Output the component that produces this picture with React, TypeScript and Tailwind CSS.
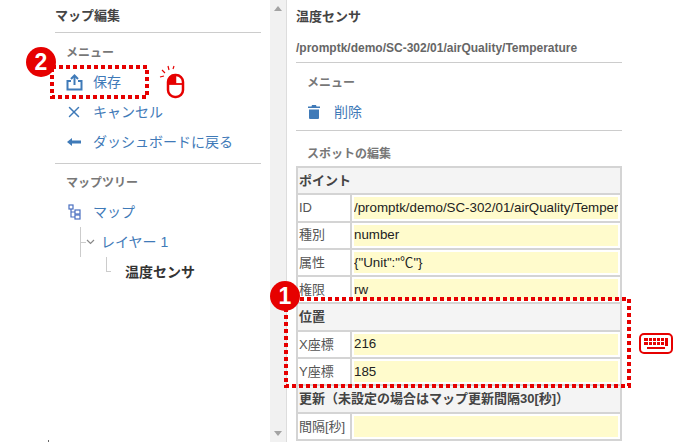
import { X } from "lucide-react";

const FONT = "font-['Liberation_Sans','Noto_Sans_CJK_JP',sans-serif]";

const SideItem = ({ icon, label }: { icon: React.ReactNode; label: string }) => (
  <div className="flex h-[30px] items-center text-[14px] text-[#3f7ab8]">
    <span className="flex w-[38px] justify-center">{icon}</span>
    <span>{label}</span>
  </div>
);

const Row = ({ label, value }: { label: string; value: string }) => (
  <div className="flex h-[27.3px] border-b-2 border-[#d4d4d4]">
    <div className="flex w-[54px] items-center border-r-2 border-[#d4d4d4] pl-[1px] text-[13px] text-[#555]">
      {label}
    </div>
    <div className="min-w-0 flex-1 p-[2px]">
      <div className="flex h-full items-center overflow-hidden whitespace-nowrap bg-[#fffbcc] text-[13.33px] text-[#222]">
        {value}
      </div>
    </div>
  </div>
);

const Head = ({ label }: { label: string }) => (
  <div className="flex h-[27.3px] items-center border-b-2 border-[#d4d4d4] bg-[#f4f4f4] pl-[1px] text-[13px] font-bold text-[#444]">
    {label}
  </div>
);

const Badge = ({ n, className }: { n: string; className: string }) => (
  <div
    className={`absolute flex h-[30px] w-[30px] items-center justify-center rounded-full bg-[#e60000] text-[23px] font-bold text-white ${className}`}
  >
    {n}
  </div>
);

const DottedBox = ({ w, h, className }: { w: number; h: number; className: string }) => (
  <svg className={`absolute ${className}`} width={w} height={h} fill="none">
    <rect x="2" y="2" width={w - 4} height={h - 4} stroke="#e60000" strokeWidth="4" strokeDasharray="4 3" />
  </svg>
);

export default function App() {
  return (
    <div className={`relative flex h-[442px] w-[674px] overflow-hidden bg-white ${FONT}`}>
      {/* 左: マップ編集 */}
      <div className="ml-[55px] w-[206px]">
        <div className="flex h-[33px] items-center border-b border-[#ccc] text-[13px] font-bold text-[#444]">
          マップ編集
        </div>
        <div className="px-[11px] pt-[12px] text-[12px] font-bold leading-[16px] text-[#777]">メニュー</div>
        <div className="mt-[6px] border-b border-[#ccc] pb-[6px]">
          <SideItem
            icon={
              <svg width="17" height="17" viewBox="0 0 17 17" fill="none" stroke="currentColor" strokeWidth="2">
                <path d="M5 7H1.500v8.500h14V7H12" />
                <path d="M8.500 11V2" />
                <path d="M5 5l3.500-3.500L12 5" />
              </svg>
            }
            label="保存"
          />
          <SideItem icon={<X size={18} strokeWidth={2} />} label="キャンセル" />
          <SideItem
            icon={
              <svg width="14" height="10" viewBox="0 0 14 10" fill="currentColor">
                <path d="M0 5l5-4v2.500h9v3H5V9z" />
              </svg>
            }
            label="ダッシュボードに戻る"
          />
        </div>
        <div className="px-[11px] pt-[11px] text-[12px] font-bold leading-[16px] text-[#777]">マップツリー</div>
        <div className="mt-[6px]">
          <SideItem
            icon={
              <svg width="13" height="16" viewBox="0 0 13 16" fill="none" stroke="#4a6fc0" strokeWidth="1.2">
                <rect x="1" y="1" width="4" height="4" />
                <rect x="7" y="6" width="5" height="4" />
                <rect x="7" y="11" width="5" height="4" />
                <path d="M3 5v8h4M3 8h4" />
              </svg>
            }
            label="マップ"
          />
          <div className="ml-[25px] flex h-[30px] items-center border-l border-[#ccc] text-[14px] text-[#3f7ab8]">
            <span className="w-[5px] border-t border-[#ccc]" />
            <svg width="10" height="6" viewBox="0 0 10 6" fill="none" stroke="#888" strokeWidth="1.2" className="mr-[5px]">
              <path d="M1 1l3.500 3.500L8 1" />
            </svg>
            <span>レイヤー 1</span>
          </div>
          <div className="ml-[51px] flex h-[30px] items-center">
            <span className="h-[15px] w-[5px] self-start border-b border-l border-[#ccc]" />
            <span className="ml-[14px] text-[14px] font-bold text-[#333]">温度センサ</span>
          </div>
        </div>
      </div>

      {/* スクロールバー */}
      <div className="ml-[9px] flex w-[17px] flex-col items-center justify-between border-r border-[#ddd] bg-[#f1f1f1] py-[6px]">
        <span className="h-0 w-0 border-x-[4px] border-b-[5px] border-x-transparent border-b-[#a3a3a3]" />
        <span className="h-0 w-0 border-x-[4px] border-t-[5px] border-x-transparent border-t-[#a3a3a3]" />
      </div>

      {/* 右: スポット */}
      <div className="ml-[9px] w-[326px]">
        <div className="flex h-[33px] items-center text-[13px] font-bold text-[#444]">温度センサ</div>
        <div className="flex h-[30px] items-center border-b border-[#ccc] text-[12px] font-bold text-[#666]">
          /promptk/demo/SC-302/01/airQuality/Temperature
        </div>
        <div className="px-[11px] pt-[12px] text-[12px] font-bold leading-[16px] text-[#777]">メニュー</div>
        <div className="mt-[6px] border-b border-[#ccc] pb-[3px]">
          <SideItem
            icon={
              <svg width="12" height="14" viewBox="0 0 12 14" fill="currentColor" className="mr-[3px]">
                <path d="M4 0h4l.5 1.500H12V3H0V1.500h3.500zM1 4.500h10V13a1 1 0 0 1-1 1H2a1 1 0 0 1-1-1z" />
              </svg>
            }
            label="削除"
          />
        </div>
        <div className="px-[11px] pb-[2px] pt-[15px] text-[12px] font-bold leading-[16px] text-[#777]">スポットの編集</div>
        <div className="mt-[2px] border-2 border-b-0 border-[#d4d4d4]">
          <Head label="ポイント" />
          <Row label="ID" value="/promptk/demo/SC-302/01/airQuality/Temperature" />
          <Row label="種別" value="number" />
          <Row label="属性" value={'{"Unit":"℃"}'} />
          <Row label="権限" value="rw" />
          <Head label="位置" />
          <Row label="X座標" value="216" />
          <Row label="Y座標" value="185" />
          <Head label="更新（未設定の場合はマップ更新間隔30[秒]）" />
          <Row label="間隔[秒]" value="" />
        </div>
      </div>

      {/* 注釈 */}
      <DottedBox w={99} h={34} className="left-[50px] top-[65px]" />
      <Badge n="2" className="left-[26px] top-[47px]" />
      <svg className="absolute left-[158px] top-[65px]" width="30" height="34" viewBox="0 0 30 34" fill="none" stroke="#e60000">
        <path d="M17.500 10H15a6 6 0 0 0-5 6v3h7.500z" fill="#e60000" stroke="none" />
        <rect x="10" y="10" width="15" height="22" rx="7" strokeWidth="2.500" />
        <path d="M10 19h15" strokeWidth="1.800" />
        <path d="M17.500 10v9" strokeWidth="1.500" />
        <path d="M2 12l4-1M4 5l3 3M10 1l1 4M16 1l-1 3" strokeWidth="1.200" />
      </svg>
      <DottedBox w={347} h={91} className="left-[284px] top-[297px]" />
      <Badge n="1" className="left-[270px] top-[281px]" />
      <svg className="absolute left-[639px] top-[333px]" width="34" height="21" viewBox="0 0 34 21" fill="none">
        <rect x="1" y="1" width="32" height="19" rx="4" stroke="#e60000" strokeWidth="2" />
        <path
          d="M5 5h4v3H5zM10 5h3v3h-3zM14 5h3v3h-3zM18 5h3v3h-3zM22 5h3v3h-3zM26 5h3v8h-3zM5 9h4v3H5zM10 9h3v3h-3zM14 9h3v3h-3zM18 9h3v3h-3zM22 9h3v3h-3zM8 14h18v2H8z"
          fill="#e60000"
        />
      </svg>
      <span className="absolute left-[48px] top-[440px] h-[2px] w-[1px] bg-[#666]" />
    </div>
  );
}
